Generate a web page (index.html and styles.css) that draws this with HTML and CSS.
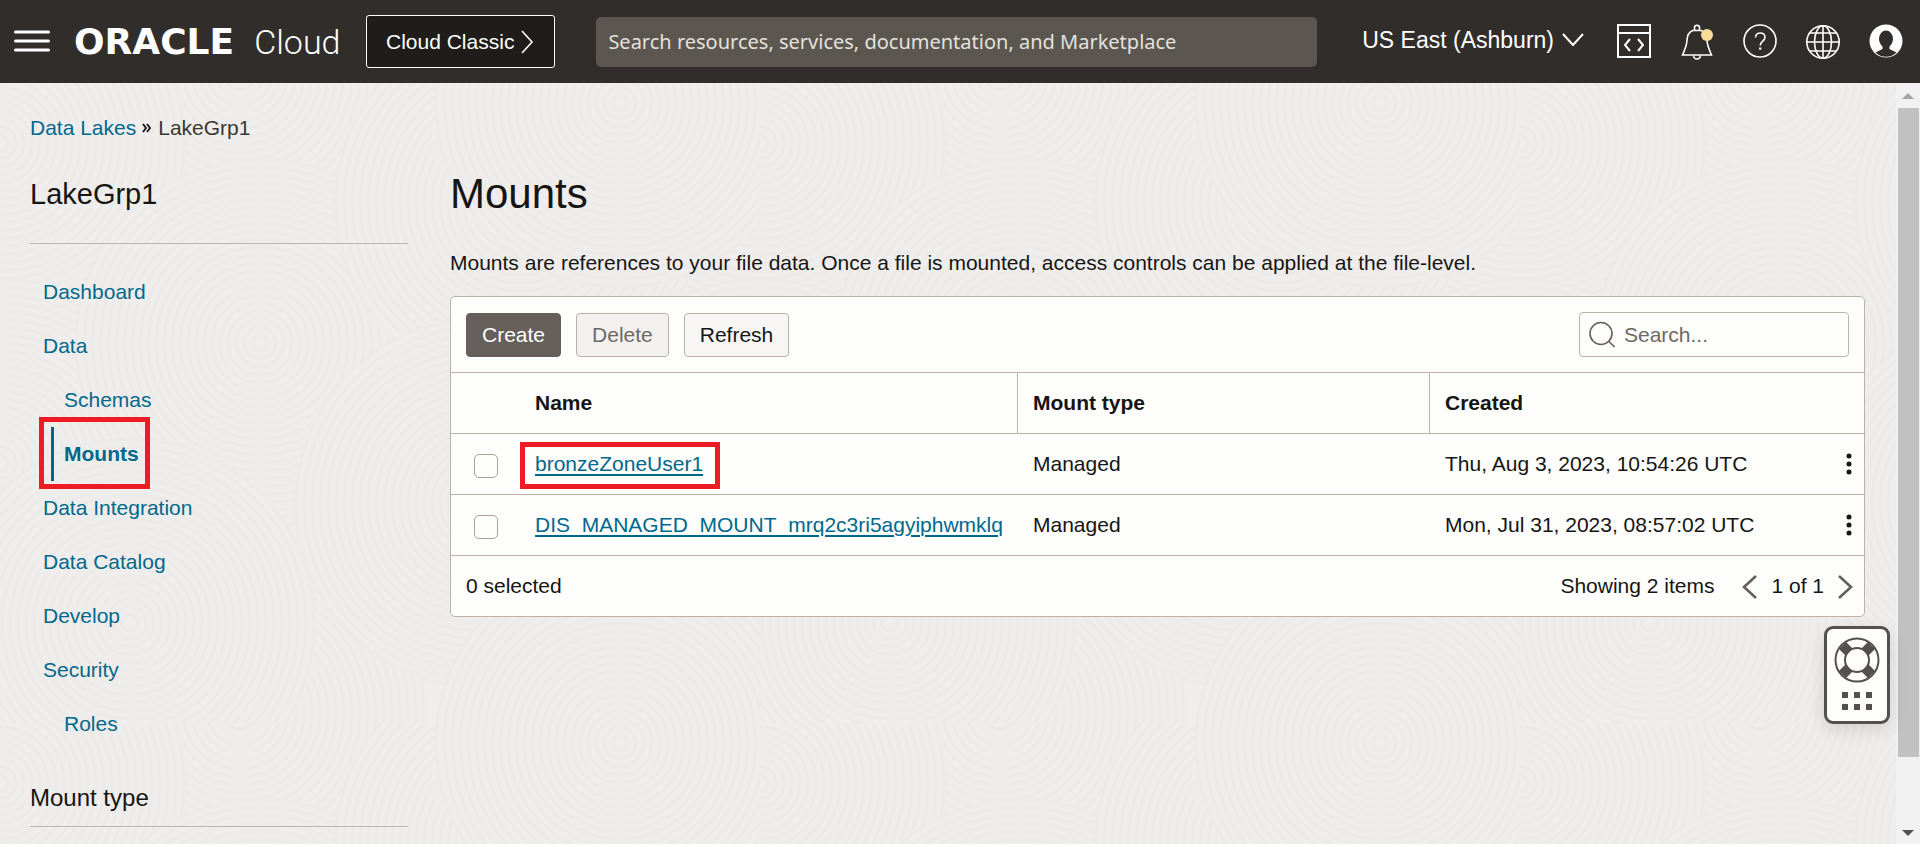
FILE: index.html
```html
<!DOCTYPE html>
<html lang="en">
<head>
<meta charset="utf-8">
<title>Mounts</title>
<link rel="stylesheet" href="styles.css">
</head>
<body>
<header class="topbar">
  <button class="icon-btn menu" aria-label="Navigation menu"><svg width="36" height="22" viewBox="0 0 36 22"><path d="M1.500 2h33M1.500 11h33M1.500 20h33" stroke="#fff" stroke-width="3" stroke-linecap="round"/></svg></button>
  <a class="brand" href="#"><span class="brand-name">ORACLE</span><span class="brand-product">Cloud</span></a>
  <button class="classic">Cloud Classic<svg width="13" height="24" viewBox="0 0 13 24" fill="none"><path d="M1 1l10 11L1 23" stroke="#fff" stroke-width="1.600"/></svg></button>
  <input class="global-search" type="text" aria-label="Search resources" placeholder="Search resources, services, documentation, and Marketplace">
  <button class="region">US East (Ashburn)<svg width="22" height="14" viewBox="0 0 22 14" fill="none"><path d="M1 1l10 11L21 1" stroke="#fff" stroke-width="2"/></svg></button>
  <div class="tools">
    <button class="icon-btn" aria-label="Developer tools"><svg width="36" height="36" viewBox="0 0 36 36" fill="none" stroke="#fff" stroke-width="2"><path d="M2 1h32v32H2z"/><path d="M2 9h32" /><path d="M14 15l-5 6 5 6M22 15l5 6-5 6"/></svg></button>
    <button class="icon-btn" aria-label="Notifications"><svg width="36" height="36" viewBox="0 0 36 36" fill="none" stroke="#fff" stroke-width="1.600"><path d="M13.800 6.500C9 8.500 8.200 12 8 16c-.2 6-2 9-4.500 15h29C30 25 28.200 22 28 16c-.2-4-1-7.500-5.800-9.500z"/><path d="M15.500 6V3.800a2.500 2.500 0 0 1 5 0V6M14.500 31.500a3.500 3.500 0 0 0 7 0"/><circle cx="28" cy="11" r="6" fill="#f9dc9b" stroke="none"/></svg></button>
    <button class="icon-btn" aria-label="Help"><svg width="36" height="36" viewBox="0 0 36 36" fill="none" stroke="#fff" stroke-width="1.600"><circle cx="18" cy="17" r="16"/><path d="M13.500 13.500c0-6 9.500-6 9.500-.3 0 4-4.800 3.800-4.800 8.300"/><path d="M18.200 23.500v2.200" stroke-width="2.200"/></svg></button>
    <button class="icon-btn" aria-label="Language"><svg width="36" height="36" viewBox="0 0 36 36" fill="none" stroke="#fff" stroke-width="1.600"><circle cx="18" cy="18" r="16.200"/><ellipse cx="18" cy="18" rx="8.500" ry="16.200"/><path d="M18 2v32M2 18h32M5 9h26M5 27h26"/></svg></button>
    <button class="icon-btn" aria-label="Profile"><svg width="36" height="36" viewBox="0 0 36 36"><circle cx="18" cy="17" r="16.500" fill="#fff"/><ellipse cx="18" cy="15" rx="7" ry="8.500" fill="#312d2a"/><path d="M14.500 21h7v4l7 3.500a15 15 0 0 1-21 0l7-3.500z" fill="#312d2a"/></svg></button>
  </div>
</header>
<div class="page">
  <svg class="texture" width="100%" height="100%" aria-hidden="true">
    <defs>
      <g id="rings" fill="#f0eeec" stroke="#edebe9" stroke-width="3">
        <circle r="184"/><circle r="176"/><circle r="168"/><circle r="160"/><circle r="152"/><circle r="144"/><circle r="136"/><circle r="128"/><circle r="120"/><circle r="112"/><circle r="104"/><circle r="96"/><circle r="88"/><circle r="80"/><circle r="72"/><circle r="64"/><circle r="56"/><circle r="48"/><circle r="40"/><circle r="32"/><circle r="24"/><circle r="16"/><circle r="8"/>
      </g>
      <pattern id="swirl" width="760" height="640" patternUnits="userSpaceOnUse">
        <use href="#rings" x="240" y="-10"/><use href="#rings" x="240" y="630"/>
        <use href="#rings" x="0" y="60"/><use href="#rings" x="760" y="60"/>
        <use href="#rings" x="0" y="380"/><use href="#rings" x="760" y="380"/>
        <use href="#rings" x="260" y="260"/>
        <use href="#rings" x="520" y="120"/>
        <use href="#rings" x="130" y="540"/>
        <use href="#rings" x="480" y="420"/>
        <use href="#rings" x="620" y="660"/><use href="#rings" x="620" y="20"/>
      </pattern>
    </defs>
    <rect width="100%" height="100%" fill="url(#swirl)"/>
  </svg>
  <div class="content">
    <nav class="crumbs" aria-label="Breadcrumb"><a href="#">Data Lakes</a><svg width="10" height="10" viewBox="0 0 10 10" fill="none"><path d="M1 1l3 4-3 4M5 1l3 4-3 4" stroke="#161513" stroke-width="1.800"/></svg><span>LakeGrp1</span></nav>
    <div class="columns">
      <aside class="side">
        <h2 class="side-title">LakeGrp1</h2>
        <ul class="nav">
          <li><a href="#">Dashboard</a></li>
          <li><a href="#">Data</a></li>
          <li><a class="sub" href="#">Schemas</a></li>
          <li><a class="sub active" href="#" aria-current="page">Mounts</a><span class="mark mark-nav"></span></li>
          <li><a href="#">Data Integration</a></li>
          <li><a href="#">Data Catalog</a></li>
          <li><a href="#">Develop</a></li>
          <li><a href="#">Security</a></li>
          <li><a class="sub" href="#">Roles</a></li>
        </ul>
        <h3 class="filter-title">Mount type</h3>
      </aside>
      <main class="main">
        <h1>Mounts</h1>
        <p class="intro">Mounts are references to your file data. Once a file is mounted, access controls can be applied at the file-level.</p>
        <section class="panel">
          <div class="toolbar">
            <button class="btn primary">Create</button>
            <button class="btn" disabled>Delete</button>
            <button class="btn">Refresh</button>
            <label class="find"><svg width="27" height="27" viewBox="0 0 27 27" fill="none" stroke="#665f5b" stroke-width="1.600"><circle cx="12" cy="12.500" r="11"/><path d="M20 20.500l5.500 5.500"/></svg><input type="text" aria-label="Search mounts" placeholder="Search..."></label>
          </div>
          <table class="grid">
            <colgroup><col class="c-check"><col class="c-name"><col class="c-type"><col><col class="c-menu"></colgroup>
            <thead><tr><th></th><th class="ruled">Name</th><th class="ruled">Mount type</th><th>Created</th><th></th></tr></thead>
            <tbody>
              <tr><td class="pick"><input type="checkbox" aria-label="Select bronzeZoneUser1"></td><td class="name"><span class="marked"><a href="#">bronzeZoneUser1</a><span class="mark mark-name"></span></span></td><td>Managed</td><td>Thu, Aug 3, 2023, 10:54:26 UTC</td><td class="more"><button class="icon-btn" aria-label="Actions"><svg width="6" height="22" viewBox="0 0 6 22" fill="#161513"><circle cx="3" cy="3" r="2.500"/><circle cx="3" cy="11" r="2.500"/><circle cx="3" cy="19" r="2.500"/></svg></button></td></tr>
              <tr><td class="pick"><input type="checkbox" aria-label="Select DIS_MANAGED_MOUNT"></td><td class="name"><a href="#">DIS_MANAGED_MOUNT_mrq2c3ri5agyiphwmklq</a></td><td>Managed</td><td>Mon, Jul 31, 2023, 08:57:02 UTC</td><td class="more"><button class="icon-btn" aria-label="Actions"><svg width="6" height="22" viewBox="0 0 6 22" fill="#161513"><circle cx="3" cy="3" r="2.500"/><circle cx="3" cy="11" r="2.500"/><circle cx="3" cy="19" r="2.500"/></svg></button></td></tr>
            </tbody>
          </table>
          <div class="foot">
            <span>0 selected</span>
            <span class="count">Showing 2 items</span>
            <div class="pager">
              <button class="icon-btn" aria-label="Previous page"><svg width="15" height="26" viewBox="0 0 15 26" fill="none"><path d="M14 3L2 14l12 11" stroke="#665f5b" stroke-width="2.600"/></svg></button>
              <span>1 of 1</span>
              <button class="icon-btn" aria-label="Next page"><svg width="15" height="26" viewBox="0 0 15 26" fill="none"><path d="M1 3l12 11L1 25" stroke="#665f5b" stroke-width="2.600"/></svg></button>
            </div>
          </div>
        </section>
      </main>
    </div>
  </div>
  <div class="scroll" aria-hidden="true">
    <svg width="12" height="6" viewBox="0 0 12 6"><path d="M0 6l6-6 6 6z" fill="#a3a3a3"/></svg>
    <div class="track"><div class="thumb"></div></div>
    <svg width="12" height="6" viewBox="0 0 12 6"><path d="M0 0l6 6 6-6z" fill="#505050"/></svg>
  </div>
  <button class="support" aria-label="Support">
    <svg width="46" height="46" viewBox="0 0 46 46" fill="none" stroke="#54504d"><circle cx="23" cy="23" r="21.500" stroke-width="2"/><circle cx="23" cy="23" r="12" stroke-width="2"/><path stroke-width="10" d="M8.500 8.500l6.500 6.500M31 31l6.500 6.500M37.500 8.500L31 15M15 31l-6.500 6.500"/></svg>
    <svg width="30" height="18" viewBox="0 0 30 18" fill="#54504d"><path d="M0 0h6v6H0zM12 0h6v6h-6zM24 0h6v6h-6zM0 12h6v6H0zM12 12h6v6h-6zM24 12h6v6h-6z"/></svg>
  </button>
</div>
</body>
</html>
```
FILE: styles.css
```css
* { box-sizing: border-box; }
html, body { height: 100%; margin: 0; }
body {
  display: flex;
  flex-direction: column;
  overflow: hidden;
  padding-bottom: 3px;
  font-family: "Liberation Sans", Arial, sans-serif;
  font-size: 21px;
  line-height: 24px;
  color: #161513;
  background: #fff;
}
button, input { font: inherit; }
button { cursor: pointer; }
svg { display: block; flex: none; }
a { color: #00688c; }

.icon-btn { display: flex; padding: 0; border: 0; background: none; }

.topbar {
  display: flex;
  align-items: center;
  flex: none;
  height: 83px;
  padding: 0 16px 0 14px;
  background: #312d2a;
  color: #fff;
}
.menu { margin-bottom: 2px; }
.brand {
  display: flex;
  align-items: baseline;
  gap: 20px;
  width: 316px;
  padding-left: 24px;
  color: #fff;
  text-decoration: none;
  line-height: 40px;
}
.brand-name { font-family: "DejaVu Sans", sans-serif; font-weight: 700; font-size: 36px; }
.brand-product { font-family: Roboto, sans-serif; font-weight: 300; font-size: 34px; }
.classic {
  display: flex;
  align-items: center;
  gap: 7px;
  height: 53px;
  padding: 0 20px 0 19px;
  border: 1px solid #fff;
  border-radius: 3px;
  background: #201c19;
  color: #fff;
  white-space: nowrap;
}
.global-search {
  flex: 1;
  min-width: 0;
  height: 50px;
  margin: 0 45px 0 41px;
  padding: 0 12px;
  border: 0;
  border-radius: 5px;
  background: #5b564f;
  font-family: "Noto Sans", sans-serif;
  font-size: 20px;
  color: #fff;
}
.global-search::placeholder { color: #e4e1dd; opacity: 1; }
.region {
  display: flex;
  align-items: center;
  gap: 8px;
  padding: 0 0 4px;
  border: 0;
  background: none;
  color: #fff;
  font-size: 23px;
  white-space: nowrap;
}
.tools { display: flex; gap: 27px; margin-left: 32px; }

.page { position: relative; display: flex; flex: 1; min-height: 0; background: #f0eeec; }
.texture { position: absolute; inset: 0; }
.content { position: relative; flex: 1; min-width: 0; padding: 33px 31px 0 30px; overflow: hidden; }
.crumbs { display: flex; align-items: center; gap: 6px; color: #3b3734; }
.crumbs a { text-decoration: none; }
.columns { display: grid; grid-template-columns: 378px minmax(0, 1fr); gap: 42px; }

.side-title {
  margin: 0 0 21px;
  padding: 36px 0 31px;
  border-bottom: 1px solid #bbb6b1;
  font-weight: 400;
  font-size: 29px;
  line-height: 36px;
}
.nav { margin: 0; padding: 0 0 0 13px; list-style: none; }
.nav li { position: relative; display: flex; height: 54px; align-items: center; }
.nav a { text-decoration: none; }
.nav .sub { padding-left: 21px; }
.nav .active {
  margin-left: 8px;
  padding-left: 10px;
  border-left: 3px solid #00688c;
  font-weight: 700;
  line-height: 54px;
}
.filter-title {
  margin: 31px 0 0;
  padding-bottom: 12px;
  border-bottom: 1px solid #bbb6b1;
  font-weight: 400;
  font-size: 24px;
  line-height: 32px;
}
.mark { position: absolute; border: 5px solid #ed1c24; pointer-events: none; }
.mark-nav { left: -4px; top: -10px; width: 111px; height: 72px; }
.mark-name { inset: -10px -17px -13px -15px; }
.marked { position: relative; display: inline-block; }

.main h1 { margin: 29px 0 0; font-weight: 400; font-size: 42px; line-height: 50px; }
.intro { margin: 32px 0 21px; }
.panel { border: 1px solid #bbb3ab; border-radius: 5px; background: #fdfdfc; }
.toolbar { display: flex; align-items: center; gap: 15px; height: 75px; padding: 0 15px; }
.btn {
  height: 44px;
  padding: 0 15px;
  border: 1px solid #bbb3ab;
  border-radius: 4px;
  background: #f8f6f5;
  color: #161513;
}
.btn.primary { border-color: #665f5b; background: #665f5b; color: #fff; }
.btn:disabled { background: #f3f1ef; color: #6d6965; }
.find {
  display: flex;
  align-items: center;
  gap: 8px;
  width: 270px;
  height: 45px;
  margin-left: auto;
  padding: 0 9px;
  border: 1px solid #bbb3ab;
  border-radius: 4px;
}
.find input { flex: 1; min-width: 0; padding: 0; border: 0; outline: 0; background: none; }
.find input::placeholder { color: #6d6965; opacity: 1; }

.grid { width: 100%; border-collapse: separate; border-spacing: 0; table-layout: fixed; }
.c-check { width: 69px; }
.c-name { width: 498px; }
.c-type { width: 412px; }
.c-menu { width: 36px; }
.grid th, .grid td { height: 61px; padding: 0 15px; border-top: 1px solid #bbb3ab; text-align: left; white-space: nowrap; }
.grid th.ruled { border-right: 1px solid #bbb3ab; }
.grid a { text-decoration-thickness: 2px; text-underline-offset: 3px; }
.grid .pick { padding: 0 0 0 23px; }
.pick input {
  appearance: none;
  display: block;
  width: 24px;
  height: 24px;
  margin: 4px 0 0;
  border: 1px solid #aaa29b;
  border-radius: 5px;
  background: #fdfdfc;
}
.grid .more { padding: 0 0 0 18px; }
.foot { display: flex; align-items: center; height: 61px; padding: 0 11px 0 15px; border-top: 1px solid #bbb3ab; }
.count { margin-left: auto; }
.pager { display: flex; align-items: center; gap: 14px; margin-left: 28px; }

.scroll {
  position: relative;
  display: flex;
  flex-direction: column;
  align-items: center;
  gap: 9px;
  width: 24px;
  padding: 10px 0 8px;
  background: #f1f1f1;
}
.track { flex: 1; width: 21px; }
.thumb { height: 91%; background: #c1c1c1; }

.support {
  position: absolute;
  right: 30px;
  bottom: 120px;
  display: flex;
  flex-direction: column;
  align-items: center;
  gap: 9px;
  padding: 8px 7px 11px;
  border: 3px solid #54504d;
  border-radius: 9px;
  background: #fdfdfc;
  box-shadow: 0 6px 18px rgba(0, 0, 0, .12);
}
```
